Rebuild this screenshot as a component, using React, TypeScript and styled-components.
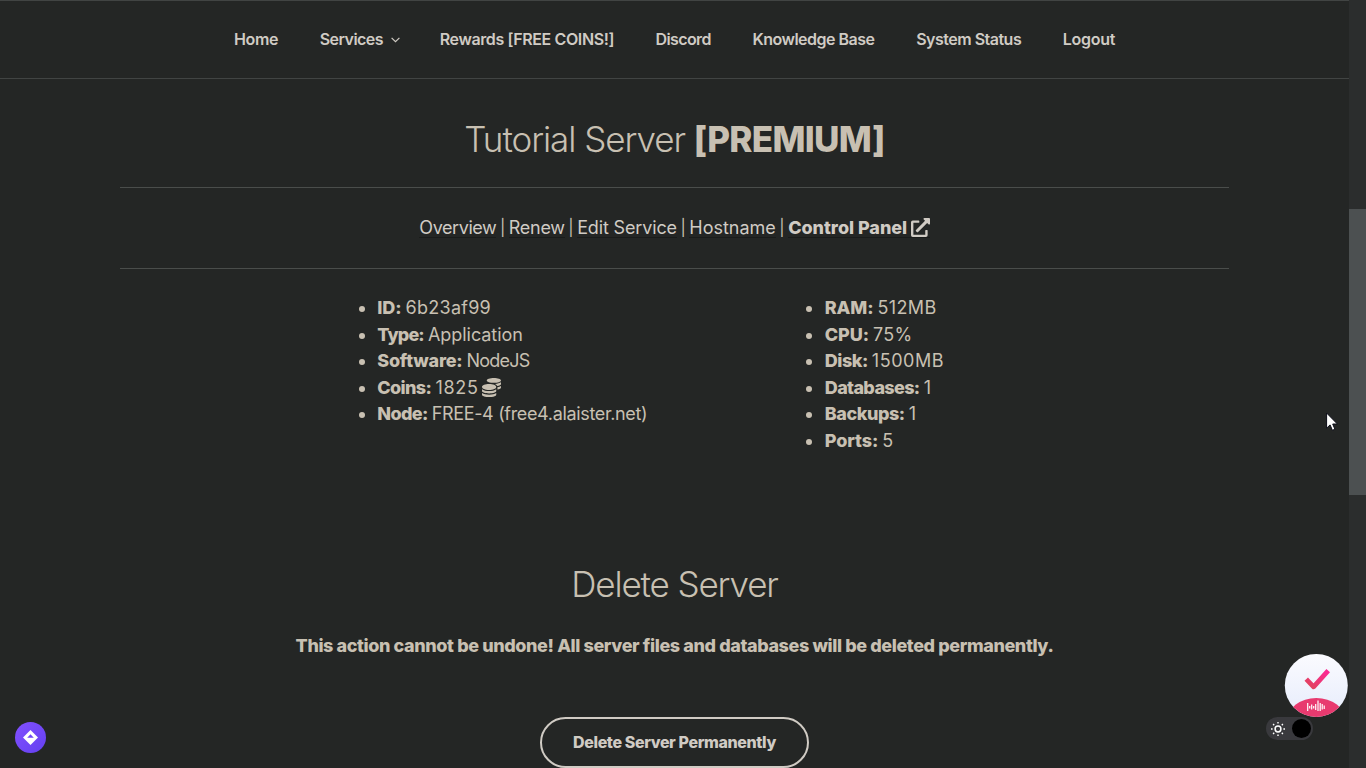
import React from 'react';
import styled, { createGlobalStyle, css } from 'styled-components';
import { FaCoins, FaExternalLinkAlt } from 'react-icons/fa';

const GlobalStyle = createGlobalStyle`
  *, *::before, *::after { box-sizing: border-box; }
  body {
    margin: 0;
    overflow: hidden;
    background: #242625;
    color: #c8c0b2;
    font-family: Inter, 'Liberation Sans', sans-serif;
    font-size: 18px;
  }
`;

const Window = styled.div`
  display: flex;
  width: 1366px;
  height: 768px;
  overflow: hidden;
`;

const Page = styled.div`
  flex: 1;
  min-width: 0;
`;

const ScrollTrack = styled.div`
  width: 17px;
  padding-top: 209px;
  background: #2b2d2d;
`;

const ScrollThumb = styled.div`
  height: 286px;
  background: #4c5051;
`;

const Header = styled.header`
  height: 79px;
  border-top: 1px solid #414443;
  border-bottom: 1px solid #414443;
`;

const Menu = styled.nav`
  display: flex;
  align-items: center;
  justify-content: center;
  gap: 41.6px;
  height: 100%;
  padding-bottom: 2px;
`;

const tracking = css<{ $track?: number }>`
  letter-spacing: ${(p) => p.$track ?? 0}px;
`;

const MenuLink = styled.a`
  display: flex;
  align-items: center;
  color: #d0cbc4;
  font-size: 16px;
  font-weight: 600;
  white-space: nowrap;
  ${tracking}
`;

const Chevron = styled.svg`
  width: 9px;
  height: 6px;
  margin: 3px -1.8px 0 8px;
  fill: none;
  stroke: #d0cbc4;
  stroke-width: 1.2;
`;

const Content = styled.main`
  width: 1109px;
  margin: 0 auto;
  padding-top: 36px;
`;

const Heading = styled.h2`
  margin: 0;
  font-size: 35px;
  font-weight: 300;
  line-height: 48px;
  text-align: center;
  white-space: nowrap;
  ${tracking}

  strong {
    font-weight: 800;
    letter-spacing: -0.7px;
  }
`;

const Tabs = styled.div`
  display: flex;
  align-items: center;
  justify-content: center;
  height: 82px;
  margin-top: 24px;
  padding-bottom: 2px;
  border-top: 1px solid #4a4d4b;
  border-bottom: 1px solid #4a4d4b;
  white-space: nowrap;
`;

const TabLink = styled.a<{ $strong?: boolean }>`
  display: flex;
  align-items: center;
  height: 20px;
  box-shadow: 0 1px 0 #1a1c1b;
  color: #d0cbc4;
  font-weight: ${(p) => (p.$strong ? 800 : 400)};
  ${tracking}

  svg {
    width: 19px;
    height: 19px;
    margin-left: 3.5px;
  }
`;

const Divider = styled.span`
  width: 12.3px;
  font-size: 16px;
  text-align: center;
`;

const Specs = styled.div`
  display: grid;
  grid-template-columns: 447.5px 1fr;
  padding: 25.2px 0 0 238px;
`;

const SpecList = styled.ul`
  margin: 0;
  padding: 0;
  list-style: none;
`;

const SpecRow = styled.li`
  display: flex;
  align-items: center;
  height: 26.6px;
  white-space: nowrap;

  &::before {
    content: '';
    width: 6px;
    height: 6px;
    margin: 3px 12.6px 0 0.7px;
    border-radius: 50%;
    background: #c8c0b2;
  }

  svg {
    width: 19px;
    height: 19px;
    margin-left: 3.4px;
  }
`;

const Label = styled.span`
  margin-right: 4.1px;
  font-weight: 800;
  ${tracking}
`;

const Value = styled.span`
  ${tracking}
`;

const DangerZone = styled.section`
  display: flex;
  flex-direction: column;
  align-items: center;
  padding-top: 106.2px;
`;

const Warning = styled.p`
  margin: 24px 0 58px;
  font-weight: 800;
  line-height: 27px;
  white-space: nowrap;
  letter-spacing: -0.396px;
`;

const DeleteButton = styled.button`
  width: 269px;
  height: 51px;
  padding: 0;
  border: 2px solid #d0cbc4;
  border-radius: 26px;
  background: transparent;
  color: #d0cbc4;
  font: 800 16px Inter, 'Liberation Sans', sans-serif;
  letter-spacing: -0.39px;
  white-space: nowrap;
`;

const ConsentBadge = styled.svg`
  position: absolute;
  left: 15px;
  top: 722px;
  width: 31px;
  height: 31px;
`;

const ThemeToggle = styled.div`
  position: absolute;
  left: 1266px;
  top: 717px;
  display: flex;
  align-items: center;
  justify-content: space-between;
  width: 47px;
  height: 23px;
  padding: 0 2px 0 4px;
  border-radius: 12px;
  background: #39393d;
`;

const Sun = styled.svg`
  width: 16px;
  height: 16px;
  fill: none;
  stroke: #fff;
`;

const Knob = styled.span`
  width: 19px;
  height: 19px;
  border-radius: 50%;
  background: #000;
`;

const TaskBadge = styled.svg`
  position: absolute;
  left: 1284px;
  top: 653px;
  width: 65px;
  height: 65px;
`;

const Pointer = styled.svg`
  position: absolute;
  left: 1326px;
  top: 412px;
  width: 12px;
  height: 20px;
`;

type Spec = { label: string; value: string; lt?: number; vt?: number; coins?: boolean };

const menu = [
  { text: 'Home', track: -0.35 },
  { text: 'Services', track: -0.55, dropdown: true },
  { text: 'Rewards [FREE COINS!]', track: -0.39 },
  { text: 'Discord', track: -0.62 },
  { text: 'Knowledge Base', track: -0.5 },
  { text: 'System Status', track: -0.5 },
  { text: 'Logout', track: -0.3 },
];

const tabs = [
  { text: 'Overview', track: -0.42 },
  { text: 'Renew', track: -0.25 },
  { text: 'Edit Service', track: -0.14 },
  { text: 'Hostname', track: 0 },
];

const service: Spec[] = [
  { label: 'ID:', value: '6b23af99', lt: -0.1, vt: 0.26 },
  { label: 'Type:', value: 'Application', lt: -0.85, vt: -0.05 },
  { label: 'Software:', value: 'NodeJS', lt: -0.22, vt: -0.8 },
  { label: 'Coins:', value: '1825', lt: -0.62, vt: 0.75, coins: true },
  { label: 'Node:', value: 'FREE-4 (free4.alaister.net)', lt: -0.65, vt: -0.34 },
];

const resources: Spec[] = [
  { label: 'RAM:', value: '512MB', lt: -0.1, vt: 0.35 },
  { label: 'CPU:', value: '75%', lt: -0.1, vt: 0.3 },
  { label: 'Disk:', value: '1500MB', lt: -0.5, vt: 0.55 },
  { label: 'Databases:', value: '1', lt: -0.64 },
  { label: 'Backups:', value: '1', lt: -0.45 },
  { label: 'Ports:', value: '5', lt: -0.1 },
];

const Specification = ({ items }: { items: Spec[] }) => (
  <SpecList>
    {items.map((s) => (
      <SpecRow key={s.label}>
        <Label $track={s.lt}>{s.label}</Label>
        <Value $track={s.vt}>{s.value}</Value>
        {s.coins && <FaCoins />}
      </SpecRow>
    ))}
  </SpecList>
);

export default function App() {
  return (
    <>
      <GlobalStyle />
      <Window>
        <Page>
          <Header>
            <Menu>
              {menu.map((m) => (
                <MenuLink key={m.text} $track={m.track}>
                  {m.text}
                  {m.dropdown && (
                    <Chevron viewBox="0 0 9 6">
                      <path d="M.6.8 4.5 4.7 8.4.8" />
                    </Chevron>
                  )}
                </MenuLink>
              ))}
            </Menu>
          </Header>
          <Content>
            <Heading $track={-1.07}>
              Tutorial Server <strong>[PREMIUM]</strong>
            </Heading>
            <Tabs>
              {tabs.map((t) => (
                <React.Fragment key={t.text}>
                  <TabLink $track={t.track}>{t.text}</TabLink>
                  <Divider>|</Divider>
                </React.Fragment>
              ))}
              <TabLink $strong $track={-0.03}>
                Control Panel
                <FaExternalLinkAlt />
              </TabLink>
            </Tabs>
            <Specs>
              <Specification items={service} />
              <Specification items={resources} />
            </Specs>
            <DangerZone>
              <Heading $track={-1.15}>Delete Server</Heading>
              <Warning>
                This action cannot be undone! All server files and databases will be deleted permanently.
              </Warning>
              <DeleteButton>Delete Server Permanently</DeleteButton>
            </DangerZone>
          </Content>
        </Page>
        <ScrollTrack>
          <ScrollThumb />
        </ScrollTrack>
      </Window>

      <ConsentBadge viewBox="0 0 31 31">
        <defs>
          <linearGradient id="violet" x1="0" y1="0" x2="1" y2="1">
            <stop offset="0" stopColor="#8250ff" />
            <stop offset="1" stopColor="#6340f0" />
          </linearGradient>
        </defs>
        <circle cx="15.5" cy="15.5" r="15.5" fill="url(#violet)" />
        <path d="M15.5 8 23 15.5 15.5 23 8 15.5Z" fill="#fff" />
        <path d="M15.5 12.2 18.8 15.8H12.2Z" fill="#7047f6" />
      </ConsentBadge>

      <ThemeToggle>
        <Sun viewBox="0 0 16 16">
          <circle cx="8" cy="8" r="2.9" strokeWidth="1.5" />
          <path
            d="M8 1v1.6M8 13.4V15M1 8h1.6M13.4 8H15M3.1 3.1l1.1 1.1M11.8 11.8l1.1 1.1M3.1 12.9l1.1-1.1M11.8 4.2l1.1-1.1"
            strokeWidth="1.4"
          />
        </Sun>
        <Knob />
      </ThemeToggle>

      <TaskBadge viewBox="0 0 65 65">
        <defs>
          <clipPath id="disc">
            <circle cx="32.3" cy="32.4" r="31.5" />
          </clipPath>
          <linearGradient id="paper" x1="0" y1="0" x2="0" y2="1">
            <stop offset="0" stopColor="#fbfbff" />
            <stop offset="1" stopColor="#e6ecfb" />
          </linearGradient>
          <linearGradient id="tick" x1="1" y1="0" x2="0" y2="1">
            <stop offset="0" stopColor="#fb2a92" />
            <stop offset="1" stopColor="#e0445c" />
          </linearGradient>
        </defs>
        <g clipPath="url(#disc)">
          <rect width="65" height="65" fill="url(#paper)" />
          <ellipse cx="32.3" cy="67" rx="29" ry="22" fill="#e83a6f" />
        </g>
        <path d="M23.9 27.8 29.6 33.8 42.6 19.4" fill="none" stroke="url(#tick)" strokeWidth="4.8" strokeLinecap="square" strokeLinejoin="round" />
        <path
          d="M23.7 50v8M25.7 53v2.5M27.7 51.5v5M29.7 53v2.5M31.7 51v6M34 47.5v10.5M36.2 50v8M38.2 51v5.5M40.2 52.5v3.5"
          fill="none"
          stroke="#fff"
          strokeWidth="1.2"
        />
      </TaskBadge>

      <Pointer viewBox="0 0 12 20">
        <path
          d="M.6 1v15.2l3.5-3.3 2.3 5.4 2.5-1.1-2.2-5.2h4.7Z"
          fill="#fff"
          stroke="#0c0d18"
          strokeWidth="1"
        />
      </Pointer>
    </>
  );
}
